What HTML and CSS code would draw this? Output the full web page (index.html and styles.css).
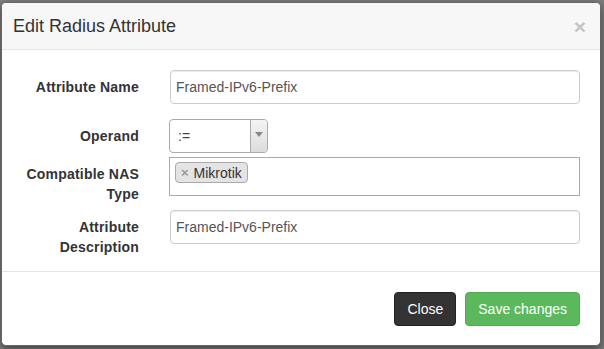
FILE: index.html
```html
<!DOCTYPE html>
<html lang="en">
<head>
  <meta charset="UTF-8">
  <title>Edit Radius Attribute</title>
  <link rel="stylesheet" href="styles.css">
</head>
<body>

  <div class="modal">
    <div class="modal-header">
      <h4 class="modal-title">Edit Radius Attribute</h4>
      <span class="close">&times;</span>
    </div>

    <div class="modal-body">
      <div class="form-row row-name">
        <label>Attribute Name</label>
        <div class="field"><input type="text" value="Framed-IPv6-Prefix"></div>
      </div>
      <div class="form-row row-operand">
        <label>Operand</label>
        <div class="field">
          <div class="select">
            <span class="select-value">:=</span>
            <span class="select-arrow"></span>
          </div>
        </div>
      </div>
      <div class="form-row row-nas">
        <label>Compatible NAS<br>Type</label>
        <div class="field">
          <div class="multi">
            <span class="tag"><span class="tag-x">&times;</span>Mikrotik</span>
          </div>
        </div>
      </div>
      <div class="form-row">
        <label>Attribute<br>Description</label>
        <div class="field"><input type="text" value="Framed-IPv6-Prefix"></div>
      </div>
    </div>

    <div class="modal-footer">
      <button class="btn btn-dark">Close</button>
      <button class="btn btn-success">Save changes</button>
    </div>
  </div>

</body>
</html>
```

FILE: styles.css
```css
body {
  margin: 0;
  padding: 2px 0 0 1px;
  background-color: #7d7d7d;
  font-family: "Liberation Sans", Arial, sans-serif;
  font-size: 14px;
  color: #333;
  height: 349px;
  box-sizing: border-box;
  overflow: hidden;
}

.modal {
  width: 600px;
  background: white;
  border: 1px solid #666;
  border-radius: 5px;
  box-sizing: border-box;
  box-shadow: 0 3px 9px rgba(0,0,0,0.5);
  overflow: hidden;
}

.modal-header {
  display: flex;
  align-items: center;
  justify-content: space-between;
  height: 46px;
  padding: 0 14px 0 11px;
  background-color: #f7f7f7;
  border-bottom: 1px solid #e5e5e5;
}

.modal-title {
  margin: 0;
  font-size: 18px;
  font-weight: normal;
  color: #333;
}

.close {
  font-size: 21px;
  font-weight: bold;
  color: #c4c4c4;
  line-height: 1;
}

.modal-body {
  padding: 20px 20px 14px 20px;
}

.form-row {
  display: flex;
  align-items: flex-start;
  gap: 31px;
}

.form-row label {
  width: 117px;
  flex-shrink: 0;
  text-align: right;
  font-weight: bold;
  line-height: 20px;
  padding-top: 7px;
  letter-spacing: 0.2px;
}

.field {
  flex: 1;
}

.row-name {
  margin-bottom: 15px;
}

.row-operand {
  margin-bottom: 4px;
}

.row-nas {
  margin-bottom: 6px;
}

.field input {
  width: 100%;
  height: 34px;
  box-sizing: border-box;
  padding: 6px 5px;
  border: 1px solid #ccc;
  border-radius: 4px;
  font-family: inherit;
  font-size: 14px;
  color: #555;
  box-shadow: inset 0 1px 1px rgba(0,0,0,0.075);
}

.select {
  display: flex;
  width: 99px;
  height: 34px;
  margin-left: -1px;
  box-sizing: border-box;
  border: 1px solid #aaa;
  border-radius: 4px;
  overflow: hidden;
}

.select-value {
  flex: 1;
  padding: 7px 8px;
  color: #444;
  line-height: 18px;
}

.select-arrow {
  width: 17px;
  border-left: 1px solid #aaa;
  background: linear-gradient(#f4f4f4, #dcdcdc);
  display: flex;
  justify-content: center;
  padding-top: 12px;
  box-sizing: border-box;
}

.select-arrow::before {
  content: "";
  width: 0;
  height: 0;
  border-left: 4px solid transparent;
  border-right: 4px solid transparent;
  border-top: 5px solid #888;
}

.multi {
  height: 39px;
  margin-left: -1px;
  box-sizing: border-box;
  border: 1px solid #aaa;
  padding: 4px 5px;
}

.tag {
  display: inline-flex;
  align-items: center;
  height: 21px;
  box-sizing: border-box;
  padding: 0 5px 0 5px;
  background: #e4e4e4;
  border: 1px solid #aaa;
  border-radius: 4px;
  color: #333;
  font-size: 14px;
}

.tag-x {
  color: #999;
  font-weight: bold;
  font-size: 13px;
  margin-right: 5px;
}

.modal-footer {
  display: flex;
  justify-content: flex-end;
  gap: 9px;
  padding: 20px 20px 19px;
  border-top: 1px solid #e5e5e5;
}

.btn {
  height: 34px;
  padding: 6px 12px;
  font-family: inherit;
  font-size: 14px;
  color: white;
  border-radius: 4px;
  border: 1px solid transparent;
}

.btn-dark {
  background-color: #333;
  border-color: #222;
}

.btn-success {
  background-color: #5cb85c;
  border-color: #4cae4c;
}
```
